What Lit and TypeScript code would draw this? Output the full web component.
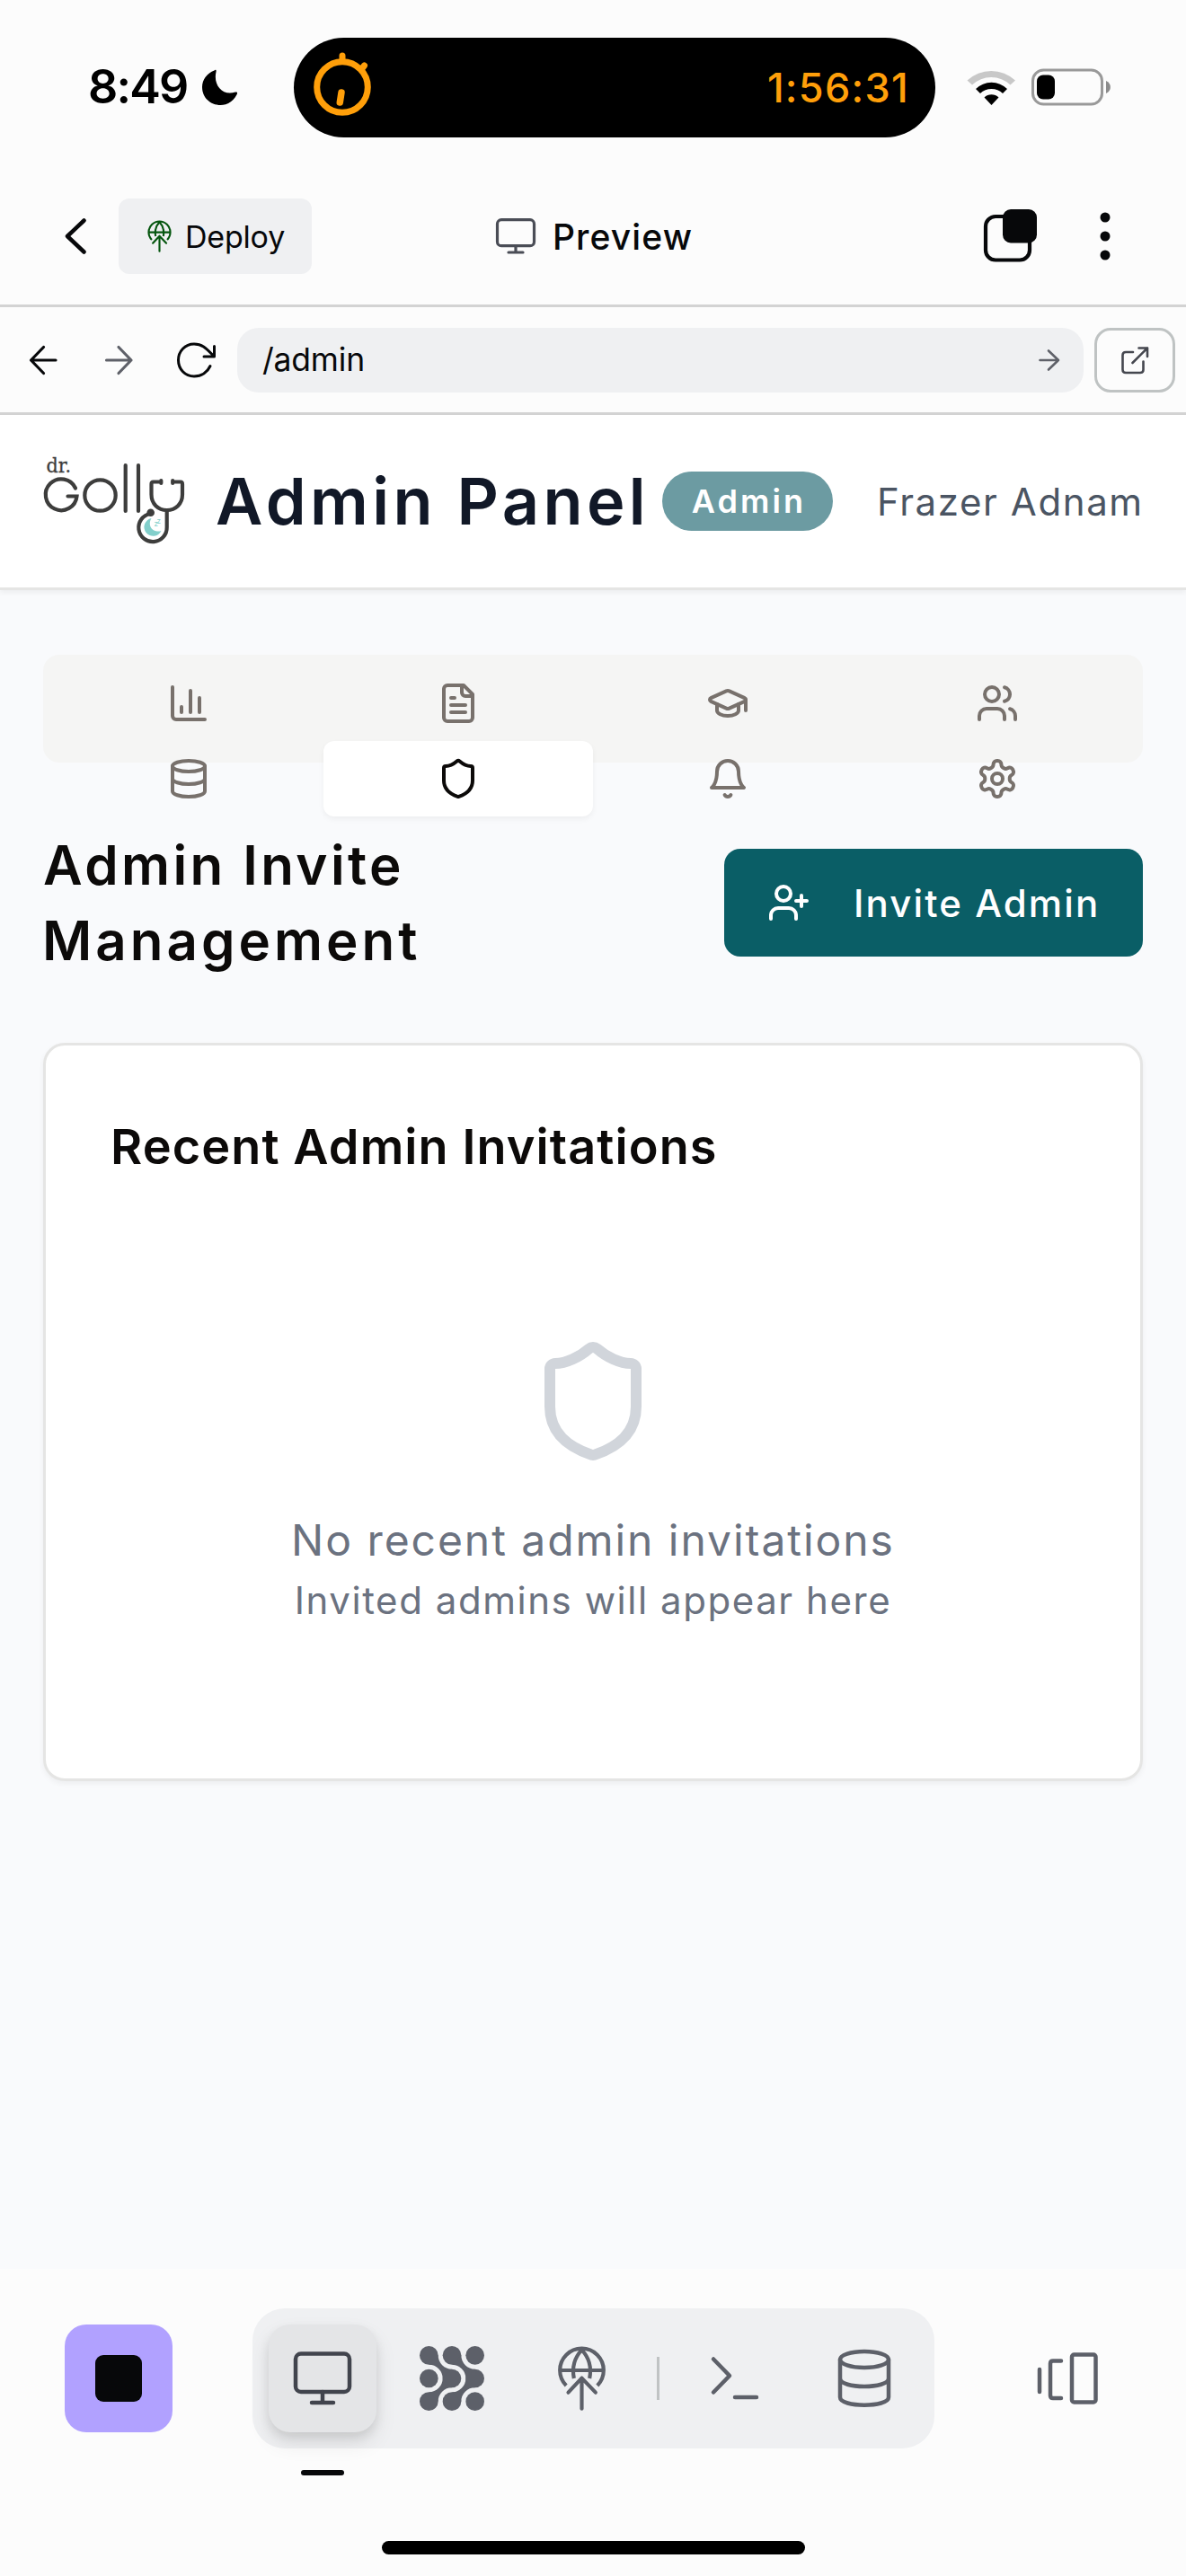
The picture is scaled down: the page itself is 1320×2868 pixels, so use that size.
import { LitElement, html, css, svg, TemplateResult, SVGTemplateResult } from "lit";
import { customElement, state } from "lit/decorators.js";
import { classMap } from "lit/directives/class-map.js";

/* 24-unit stroked icons used inside the admin panel */
const lineIcons: Record<string, SVGTemplateResult> = {
  chart: svg`<path d="M3 3v16a2 2 0 0 0 2 2h16M18 17V9M13 17V5M8 17v-3"/>`,
  file: svg`<path d="M15 2H6a2 2 0 0 0-2 2v16a2 2 0 0 0 2 2h12a2 2 0 0 0 2-2V7Z"/><path d="M14 2v4a2 2 0 0 0 2 2h4M10 9H8M16 13H8M16 17H8"/>`,
  course: svg`<path d="M21.42 10.922a1 1 0 0 0-.019-1.838L12.83 5.18a2 2 0 0 0-1.66 0L2.6 9.08a1 1 0 0 0 0 1.832l8.57 3.908a2 2 0 0 0 1.66 0z"/><path d="M22 10v6M6 12.5V16a6 3 0 0 0 12 0v-3.5"/>`,
  users: svg`<path d="M16 21v-2a4 4 0 0 0-4-4H6a4 4 0 0 0-4 4v2"/><circle cx="9" cy="7" r="4"/><path d="M22 21v-2a4 4 0 0 0-3-3.87M16 3.13a4 4 0 0 1 0 7.75"/>`,
  database: svg`<ellipse cx="12" cy="5" rx="9" ry="3"/><path d="M3 5V19A9 3 0 0 0 21 19V5M3 12A9 3 0 0 0 21 12"/>`,
  shield: svg`<path d="M20 13c0 5-3.5 7.5-7.66 8.95a1 1 0 0 1-.67-.01C7.5 20.5 4 18 4 13V6a1 1 0 0 1 1-1c2 0 4.5-1.2 6.24-2.72a1.17 1.17 0 0 1 1.52 0C14.51 3.81 17 5 19 5a1 1 0 0 1 1 1z"/>`,
  bell: svg`<path d="M6 8a6 6 0 0 1 12 0c0 7 3 9 3 9H3s3-2 3-9M10.3 21a1.94 1.94 0 0 0 3.4 0"/>`,
  settings: svg`<path d="M12.22 2h-.44a2 2 0 0 0-2 2v.18a2 2 0 0 1-1 1.73l-.43.25a2 2 0 0 1-2 0l-.15-.08a2 2 0 0 0-2.73.73l-.22.38a2 2 0 0 0 .73 2.73l.15.1a2 2 0 0 1 1 1.72v.51a2 2 0 0 1-1 1.74l-.15.09a2 2 0 0 0-.73 2.73l.22.38a2 2 0 0 0 2.73.73l.15-.08a2 2 0 0 1 2 0l.43.25a2 2 0 0 1 1 1.73V20a2 2 0 0 0 2 2h.44a2 2 0 0 0 2-2v-.18a2 2 0 0 1 1-1.73l.43-.25a2 2 0 0 1 2 0l.15.08a2 2 0 0 0 2.73-.73l.22-.39a2 2 0 0 0-.73-2.73l-.15-.08a2 2 0 0 1-1-1.74v-.5a2 2 0 0 1 1-1.74l.15-.09a2 2 0 0 0 .73-2.73l-.22-.38a2 2 0 0 0-2.73-.73l-.15.08a2 2 0 0 1-2 0l-.43-.25a2 2 0 0 1-1-1.73V4a2 2 0 0 0-2-2z"/><circle cx="12" cy="12" r="3"/>`,
  invite: svg`<path d="M16 21v-2a4 4 0 0 0-4-4H6a4 4 0 0 0-4 4v2"/><circle cx="9" cy="7" r="4"/><path d="M19 8v6M22 11h-6"/>`,
};

const lineIcon = (name: string, size = 48): TemplateResult => html`
  <svg width=${size} height=${size} viewBox="0 0 24 24" fill="none" stroke="currentColor" stroke-width="2"
    stroke-linecap="round" stroke-linejoin="round">${lineIcons[name]}</svg>`;

/* Globe with an upward arrow, shared by the Deploy button and the dock */
const globe = (width: number, height: number, stroke: number): TemplateResult => html`
  <svg width=${width} height=${height} viewBox="509 51 164 216">
    <g fill="none" stroke="currentColor" stroke-width=${stroke} stroke-linecap="round" stroke-linejoin="round">
      <path stroke-linecap="butt" d="M539 183A73 73 0 1 1 643 183M518 132H664M565 159C557 118 570 86 591 64C612 86 625 118 617 159"/>
      <path d="M591 158V260M546 206L591 158L637 206"/>
    </g>
  </svg>`;

const tabs = ["chart", "file", "course", "users", "database", "shield", "bell", "settings"];

@customElement("status-bar")
export class StatusBar extends LitElement {
  static styles = css`
    :host { display: flex; align-items: center; height: 194px; white-space: nowrap; }
    svg { display: block; flex: none; }
    .time { width: 125px; margin-left: 98px; font-size: 52px; font-weight: 600; letter-spacing: -1.8px; line-height: 1; color: #000; }
    .island { display: flex; align-items: center; justify-content: space-between; width: 714px; height: 111px; margin: 0 34px 0 61px;
      flex: none; padding: 0 29px 0 19px; box-sizing: border-box; border-radius: 56px; background: #000; color: #ff9f0a; }
    .timer { font-size: 45px; font-weight: 500; letter-spacing: 1.3px; line-height: 1; }
    .battery { margin-left: 16px; }
  `;
  render() {
    return html`
      <span class="time">8:49</span>
      <svg width="43" height="44" viewBox="223 76 43 44"><path d="M238.500 79.500C240 77.800 241 79 240.500 81C237 96 248 108.500 262 103.500C264 103 264.500 104.300 263.700 106C260 113.500 253.500 118 245.500 118C234 118 225 109.500 225 98C225 89.500 230.500 82.500 238.500 79.500Z"/></svg>
      <div class="island">
        <svg width="74" height="80" viewBox="346 57 74 80" fill="none" stroke="currentColor" stroke-linecap="round">
          <circle cx="381" cy="97" r="28.300" stroke-width="7"/>
          <path stroke-width="7" d="M381 62V68M405.500 73L402 77.500"/>
          <path stroke-width="7.500" d="M380 103L378.300 114"/>
        </svg>
        <span class="timer">1:56:31</span>
      </div>
      <svg width="56" height="42" viewBox="1074 75 56 42">
        <path fill="#c8c8c8" d="M1075.500 88.500A39 39 0 0 1 1129 88.500L1123.500 93.500A31 31 0 0 0 1081 93.500Z"/>
        <path d="M1085 98A25 25 0 0 1 1120 98L1115 103A18 18 0 0 0 1090 103Z"/>
        <path d="M1102.500 116L1094.500 107.500A11.500 11.500 0 0 1 1110.500 107.500Z"/>
      </svg>
      <svg class="battery" width="90" height="42" viewBox="1147 75.500 90 42">
        <rect x="1149.500" y="77.500" width="77" height="38" rx="12" fill="none" stroke="#999" stroke-width="3"/>
        <rect x="1154" y="83" width="20" height="27" rx="7"/>
        <path fill="#8c8c8c" d="M1231 89.500C1237.500 92 1237.500 101 1231 103.500Z"/>
      </svg>`;
  }
}

@customElement("app-bar")
export class AppBar extends LitElement {
  static styles = css`
    :host { display: flex; align-items: center; height: 148px; padding-bottom: 7px; box-sizing: border-box; color: #07080a;
      border-bottom: 3px solid #d3d3d3; white-space: nowrap; }
    svg { display: block; flex: none; }
    .back { margin-left: 70px; }
    .deploy { display: flex; align-items: center; gap: 15px; width: 215px; height: 84px; margin-left: 34px; padding-left: 32px;
      box-sizing: border-box; border-radius: 12px; background: #eff0f2; font-size: 34px; letter-spacing: -0.2px; }
    .deploy svg { color: #05560f; }
    .title { display: flex; align-items: center; gap: 18px; width: 543px; margin-left: 204px; font-size: 39px; font-weight: 500; letter-spacing: 1.1px; }
    .title svg { color: #4a4d56; }
    .more { margin-left: 67px; }
  `;
  render() {
    return html`
      <svg class="back" width="28" height="44" viewBox="70 241 28 44" fill="none" stroke="currentColor" stroke-width="4.500" stroke-linecap="round" stroke-linejoin="round"><path d="M93.500 245.500L75 263L93.500 280.500"/></svg>
      <div class="deploy">${globe(27, 36, 13)}<span>Deploy</span></div>
      <div class="title">
        <svg width="46" height="42" viewBox="551 242 46 42" fill="none" stroke="currentColor" stroke-width="3.200" stroke-linecap="round">
          <rect x="553.500" y="244.700" width="41" height="29" rx="4.500"/><path d="M574 274V281M566 281H582"/>
        </svg>
        <span>Preview</span>
      </div>
      <svg width="62" height="62" viewBox="1094 232 62 62">
        <rect x="1097" y="241" width="49" height="48.500" rx="11" fill="none" stroke="currentColor" stroke-width="4.200"/>
        <rect x="1116" y="233" width="38" height="37.500" rx="9" fill="currentColor"/>
      </svg>
      <svg class="more" width="14" height="56" viewBox="1223 235 14 56" fill="currentColor"><circle cx="1230" cy="242" r="5.500"/><circle cx="1230" cy="263" r="5.500"/><circle cx="1230" cy="284" r="5.500"/></svg>`;
  }
}

@customElement("url-bar")
export class UrlBar extends LitElement {
  static styles = css`
    :host { display: flex; align-items: center; height: 120px; box-sizing: border-box; border-bottom: 3px solid #d3d3d3; color: #07080a; }
    svg { display: block; flex: none; fill: none; stroke: currentColor; stroke-width: 3.2; stroke-linecap: round; stroke-linejoin: round; }
    .back { margin-left: 30px; }
    .forward { margin-left: 49px; color: #5f6169; }
    .reload { margin-left: 44px; stroke-width: 3; }
    .field { display: flex; align-items: center; justify-content: space-between; width: 942px; height: 72px; margin-left: 21px;
      padding: 0 25px 0 28px; box-sizing: border-box; border-radius: 24px; background: #eff0f2; font-size: 35.5px; letter-spacing: -0.2px; }
    .field svg { color: #5f6169; stroke-width: 2.6; }
    .open { display: flex; align-items: center; justify-content: center; width: 90px; height: 72px; margin-left: 12px;
      box-sizing: border-box; border: 3px solid #bfc3c3; border-radius: 18px; color: #45474f; }
    .open svg { stroke-width: 2.6; }
  `;
  render() {
    return html`
      <svg class="back" width="36" height="38" viewBox="30 382 36 38"><path d="M62 401H34.500M48.500 386.500L34.500 401L48.500 415.500"/></svg>
      <svg class="forward" width="36" height="38" viewBox="115 382 36 38"><path d="M118.500 401H146M132 386.500L146 401L132 415.500"/></svg>
      <svg class="reload" width="48" height="44" viewBox="195 379 48 44"><path d="M234 407.500C231 414 224.500 419 216 419C206 419 198.500 411 198.500 401C198.500 391 206 383 216 383C226 383 230 388.500 238 396.500M238.500 385.500V397H227"/></svg>
      <div class="field"><span>/admin</span><svg width="26" height="28" viewBox="1155 387 26 28"><path d="M1157.500 401H1178M1167 390.500L1178 401L1167 411.500"/></svg></div>
      <div class="open"><svg width="34" height="34" viewBox="1246 384 34 34"><path d="M1261 392H1253Q1249.500 392 1249.500 395.500V411.500Q1249.500 415 1253 415H1269Q1272.500 415 1272.500 411.500V402.500M1260.500 404L1277 387.500M1267.500 387.500H1277V397"/></svg></div>`;
  }
}

@customElement("admin-header")
export class AdminHeader extends LitElement {
  static styles = css`
    :host { display: flex; align-items: center; height: 195px; box-sizing: border-box; padding: 0 48px; background: #fff;
      border-bottom: 3px solid #e5e5e4; box-shadow: 0 3px 6px rgba(0, 0, 0, 0.05); white-space: nowrap; position: relative; }
    svg { display: block; flex: none; overflow: visible; }
    .title { width: 498px; flex: none; margin: 0 0 0 31px; font-size: 72px; font-weight: 600; letter-spacing: 4.4px; line-height: 1; color: #111827; }
    .badge { display: flex; flex: none; align-items: center; justify-content: center; width: 190px; height: 66px; margin-left: -1px; padding-left: 3px;
      box-sizing: border-box; border-radius: 33px; background: #6c9ba2; color: #fff; font-size: 36px; font-weight: 600; letter-spacing: 3.1px; }
    .user { margin-left: 49px; font-size: 42px; letter-spacing: 1.6px; color: #4b5563; }
    .dr { font: 22px "DejaVu Serif", "Liberation Serif", serif; fill: #3d3d3c; }
    .zz { font: 8px Inter, sans-serif; fill: #82cfcb; }
  `;
  render() {
    return html`
      <svg width="161" height="102" viewBox="47 508 161 102" fill="none" stroke="#3d3d3c" stroke-width="4.200" stroke-linecap="round">
        <text class="dr" x="50.500" y="526.500" stroke="#3d3d3c" stroke-width="0.300" textLength="27.500" lengthAdjust="spacingAndGlyphs">dr.</text>
        <path d="M83 544.500A17.400 17.400 0 1 0 84.500 553.500H74.500"/>
        <circle cx="110.500" cy="552.500" r="17.200"/>
        <path d="M138.700 519V570M153 519V570"/>
        <path d="M177 537.500H169.500Q167.500 537.500 167.500 540V551.500C167.500 562 175 569 184.700 569C194.500 569 202 562 202 551.500V540Q202 537.500 200 537.500H192.500M178.300 536V539M191.200 536V539"/>
        <path d="M184.700 570V588A15.700 15.700 0 1 1 166 573"/>
        <circle cx="166.700" cy="571.700" r="4.300" fill="#3d3d3c" stroke="none"/>
        <path d="M167.500 578A10 10 0 1 0 178.500 592C171 594.500 162 588 167.500 578Z" fill="#82cfcb" stroke="none"/>
        <text class="zz" x="170.500" y="587" stroke="none">z</text><text class="zz" x="173.500" y="583.500" stroke="none">z</text>
      </svg>
      <h1 class="title">Admin Panel</h1>
      <span class="badge">Admin</span>
      <span class="user">Frazer Adnam</span>`;
  }
}

@customElement("admin-page")
export class AdminPage extends LitElement {
  static styles = css`
    :host { display: block; height: 1869px; box-sizing: border-box; padding: 72px 48px 0; background: #f9fafc; }
    svg { display: block; flex: none; }
    h2, h3, p { margin: 0; }
    .tabs { display: grid; grid-template-columns: repeat(4, 300px); grid-auto-rows: 84px; height: 120px; padding: 12px; box-sizing: border-box;
      border-radius: 18px; background: #f5f5f4; color: #78716c; }
    .tab { display: flex; align-items: center; justify-content: center; border-radius: 12px; }
    .tab.active { background: #fff; color: #0c0a09; box-shadow: 0 3px 6px rgba(0, 0, 0, 0.05); }
    .top { display: flex; align-items: center; justify-content: space-between; margin-top: 72px; }
    .heading { font-size: 60px; font-weight: 600; line-height: 84px; letter-spacing: 3.4px; color: #0c0a09; }
    .heading span { display: block; }
    .heading .second { letter-spacing: 4px; margin-left: -1px; }
    .invite { display: flex; align-items: center; width: 466px; height: 120px; padding-left: 48px; box-sizing: border-box; border-radius: 18px;
      background: #0a5e66; color: #fff; font-size: 42px; font-weight: 500; letter-spacing: 2.1px; white-space: nowrap; }
    .invite span { margin-left: 48px; }
    .card { display: flex; flex-direction: column; height: 822px; margin-top: 72px; padding: 72px; box-sizing: border-box;
      border: 3px solid #e5e5e4; border-radius: 24px; background: #fff; box-shadow: 0 3px 6px rgba(0, 0, 0, 0.05); }
    .card-title { font-size: 54px; font-weight: 600; line-height: 81px; letter-spacing: 1.1px; color: #0c0a09; }
    .empty { display: flex; flex-direction: column; align-items: center; padding-top: 171px; color: #6b7280; }
    .empty svg { color: #d1d5db; margin-bottom: 48px; }
    .lead { font-size: 48px; line-height: 69px; letter-spacing: 1.95px; }
    .hint { font-size: 42px; line-height: 66px; letter-spacing: 1.55px; }
  `;
  @state() private active = "shield";
  render() {
    return html`
      <nav class="tabs">
        ${tabs.map((t) => html`<div class=${classMap({ tab: true, active: t === this.active })} @click=${() => (this.active = t)}>${lineIcon(t)}</div>`)}
      </nav>
      <div class="top">
        <h2 class="heading"><span>Admin Invite</span><span class="second">Management</span></h2>
        <div class="invite">${lineIcon("invite")}<span>Invite Admin</span></div>
      </div>
      <section class="card">
        <h3 class="card-title">Recent Admin Invitations</h3>
        <div class="empty">
          ${lineIcon("shield", 144)}
          <p class="lead">No recent admin invitations</p>
          <p class="hint">Invited admins will appear here</p>
        </div>
      </section>`;
  }
}

@customElement("bottom-dock")
export class BottomDock extends LitElement {
  static styles = css`
    :host { display: flex; flex-direction: column; height: 342px; box-sizing: border-box; padding-top: 44px; }
    svg { display: block; flex: none; fill: none; stroke: currentColor; stroke-width: 4.5; stroke-linecap: round; stroke-linejoin: round; }
    .row { display: flex; align-items: center; color: #5d6069; }
    .stop { display: flex; align-items: center; justify-content: center; width: 120px; height: 120px; margin-left: 72px; border-radius: 24px; background: #b1a1ff; }
    .square { width: 52px; height: 52px; border-radius: 9px; background: #07080a; }
    .dock { display: flex; align-items: center; gap: 24px; margin-left: 89px; padding: 18px; border-radius: 36px; background: #eff0f2; }
    .item { display: flex; align-items: center; justify-content: center; width: 120px; height: 120px; border-radius: 24px; }
    .item.active { background: #e4e5e7; color: #41444d; box-shadow: 0 12px 24px rgba(0, 0, 0, 0.09), 0 6px 12px rgba(0, 0, 0, 0.09); }
    .solid { fill: currentColor; stroke: none; }
    .divider { width: 3px; height: 48px; background: #c0c3c4; }
    .panels { margin-left: 112px; }
    .mark { width: 48px; height: 6px; margin: 24px 0 0 335px; border-radius: 3px; background: #07080a; }
    .home { width: 471px; height: 15px; margin: 73px auto 0; border-radius: 8px; background: #000; }
  `;
  render() {
    const dots = [31, 108, 185];
    return html`
      <div class="row">
        <div class="stop"><div class="square"></div></div>
        <div class="dock">
          <div class="item active"><svg width="66" height="60" viewBox="326 2618 66 60"><rect x="329" y="2620.500" width="60" height="42.500" rx="6"/><path d="M359 2663V2675M347 2675H371"/></svg></div>
          <div class="item"><svg class="solid" width="72" height="72" viewBox="0 0 216 216">
            ${dots.map((x) => dots.map((y) => svg`<circle cx=${x} cy=${y} r="31"/>`))}
            <path d="M62 31A46 46 0 0 0 108 77L77 108A46 46 0 0 0 31 62ZM139 31A46 46 0 0 0 185 77V108H154A46 46 0 0 0 108 62Z"/>
            <path d="M62 185A46 46 0 0 1 108 139L77 108A46 46 0 0 1 31 154ZM139 185A46 46 0 0 1 185 139V108H154A46 46 0 0 1 108 154Z"/>
          </svg></div>
          <div class="item">${globe(55, 72, 12.5)}</div>
          <div class="divider"></div>
          <div class="item"><svg width="56" height="50" viewBox="790 2623 56 50"><path d="M794 2626.500L812 2645L794 2663.500M818 2669H842"/></svg></div>
          <div class="item"><svg width="60" height="66" viewBox="932 2615 60 66"><ellipse cx="962" cy="2627" rx="27" ry="9"/><path d="M935 2627V2669C935 2680.500 989 2680.500 989 2669V2627M935 2648C935 2660 989 2660 989 2648"/></svg></div>
        </div>
        <svg class="panels" width="72" height="62" viewBox="1152 2617 72 62"><path d="M1157 2638V2663M1181 2628.500H1172Q1169 2628.500 1169 2631.500V2667Q1169 2670 1172 2670H1181"/><rect x="1193" y="2621.500" width="26.500" height="53" rx="2.500"/></svg>
      </div>
      <div class="mark"></div>
      <div class="home"></div>`;
  }
}

@customElement("app-root")
export class AppRoot extends LitElement {
  static styles = css`
    :host { display: block; width: 1320px; height: 2868px; overflow: hidden; background: #fcfcfc; font-family: Inter, "Liberation Sans", sans-serif; }
  `;
  render() {
    return html`
      <status-bar></status-bar>
      <app-bar></app-bar>
      <url-bar></url-bar>
      <admin-header></admin-header>
      <admin-page></admin-page>
      <bottom-dock></bottom-dock>`;
  }
}
